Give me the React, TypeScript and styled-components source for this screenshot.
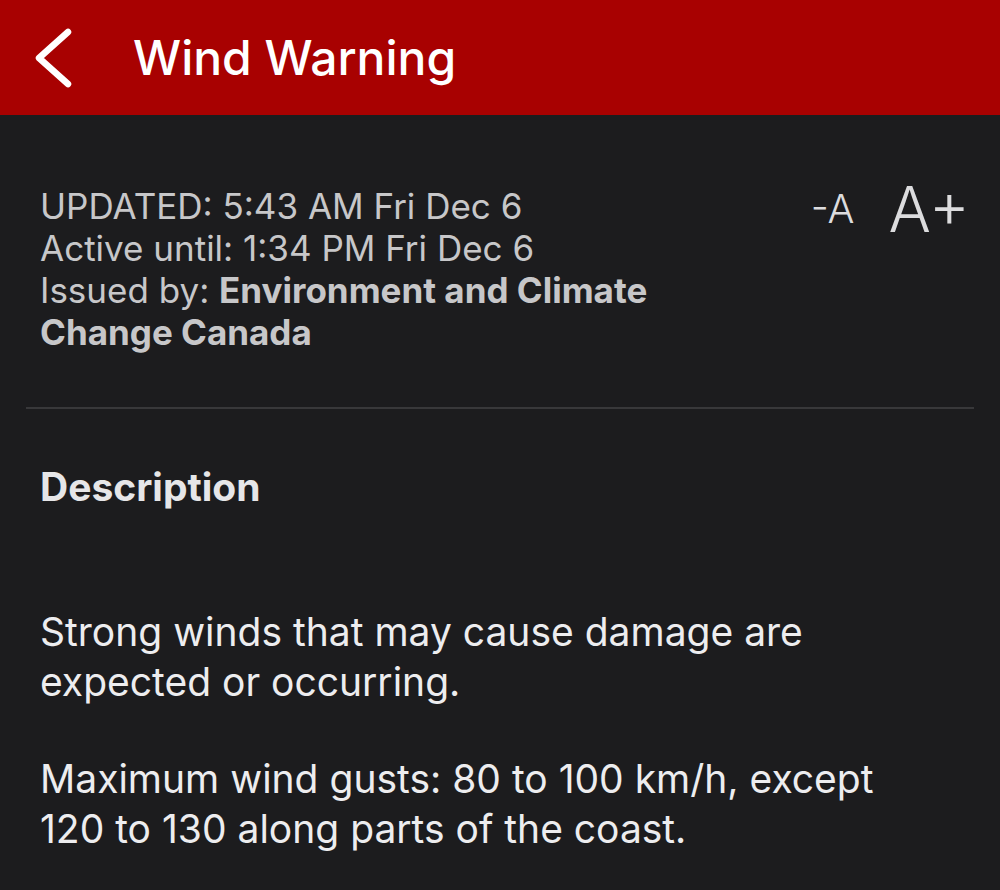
import React from "react";
import styled, { createGlobalStyle } from "styled-components";

const GlobalStyle = createGlobalStyle`
	html, body {
		margin: 0;
		padding: 0;
		background: #1c1c1e;
	}
	body {
		font-family: Inter, "Liberation Sans", sans-serif;
		-webkit-font-smoothing: antialiased;
	}
`;

const Page = styled.div`
	width: 1000px;
	height: 890px;
	background: #1c1c1e;
	overflow: hidden;
`;

const Header = styled.header`
	height: 115px;
	background: #a80101;
	display: flex;
	align-items: center;
	padding-left: 35px;
	gap: 58px;
	box-sizing: border-box;
`;

const BackButton = styled.button`
	background: none;
	border: 0;
	padding: 0;
	width: 40px;
	height: 64px;
	display: flex;
	align-items: center;
	cursor: pointer;
`;

const Title = styled.h1`
	margin: 0;
	font-size: 48px;
	font-weight: 500;
	color: #ffffff;
`;

const Meta = styled.section`
	display: flex;
	justify-content: space-between;
	align-items: flex-start;
	padding: 70px 30px 54px 40px;
`;

const MetaLines = styled.div`
	font-size: 35px;
	line-height: 42px;
	color: #c7c7c9;
	max-width: 660px;

	strong {
		font-weight: 700;
	}
`;

const SizeControls = styled.div`
	display: flex;
	align-items: center;
	gap: 34px;
	color: #dcdcde;
	height: 56px;
	margin-top: -4px;
`;

const SizeButton = styled.button<{ $size: number }>`
	background: none;
	border: 0;
	padding: 0;
	color: inherit;
	font-family: inherit;
	font-weight: 300;
	font-size: ${({ $size }) => $size}px;
	line-height: 1;
	cursor: pointer;
`;

const Divider = styled.hr`
	margin: 0 26px;
	border: 0;
	height: 2px;
	background: #38383a;
`;

const Body = styled.section`
	padding: 54px 40px 0 40px;
	color: #ededef;
`;

const SectionTitle = styled.h2`
	margin: 0 0 97px 0;
	font-size: 39px;
	font-weight: 700;
	color: #e6e6e8;
`;

const Paragraph = styled.p`
	margin: 0 0 47px 0;
	font-size: 39px;
	line-height: 50px;
	max-width: 870px;
`;

const ChevronLeft = () => (
	<svg width="40" height="64" viewBox="0 0 40 64" fill="none">
		<path
			d="M33 6 L4 32 L33 58"
			stroke="#ffffff"
			strokeWidth="6.5"
			strokeLinecap="round"
			strokeLinejoin="round"
		/>
	</svg>
);

export default function App() {
	return (
		<Page>
			<GlobalStyle />
			<Header>
				<BackButton aria-label="Back">
					<ChevronLeft />
				</BackButton>
				<Title>Wind Warning</Title>
			</Header>
			<Meta>
				<MetaLines>
					<div>UPDATED: 5:43 AM Fri Dec 6</div>
					<div>Active until: 1:34 PM Fri Dec 6</div>
					<div>
						Issued by: <strong>Environment and Climate Change Canada</strong>
					</div>
				</MetaLines>
				<SizeControls>
					<SizeButton $size={40}>-A</SizeButton>
					<SizeButton $size={63}>A+</SizeButton>
				</SizeControls>
			</Meta>
			<Divider />
			<Body>
				<SectionTitle>Description</SectionTitle>
				<Paragraph>Strong winds that may cause damage are expected or occurring.</Paragraph>
				<Paragraph>
					Maximum wind gusts: 80 to 100 km/h, except 120 to 130 along parts of the coast.
				</Paragraph>
			</Body>
		</Page>
	);
}
